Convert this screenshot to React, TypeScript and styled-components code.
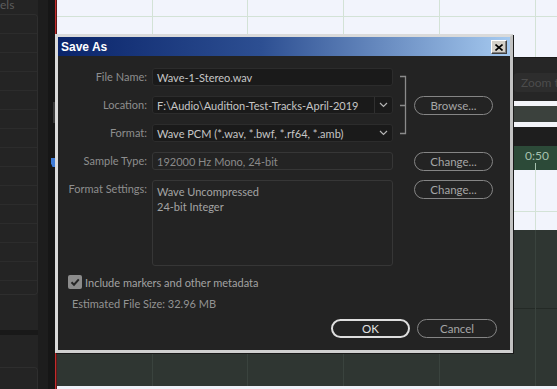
import React from "react";
import styled, { createGlobalStyle } from "styled-components";

const GlobalStyle = createGlobalStyle`
  html, body { margin: 0; padding: 0; background: #1f1f1f; }
  body { width: 557px; height: 389px; overflow: hidden; font-family: Lato, "Open Sans", sans-serif; }
  * { box-sizing: border-box; }
`;

const Screen = styled.div`
  position: relative;
  width: 557px;
  height: 389px;
  overflow: hidden;
  display: flex;
  background: #1f1f1f;
`;

/* ---------- left side panels ---------- */
const LeftPanel = styled.div`
  width: 38px;
  display: flex;
  flex-direction: column;
  background: #242424;
`;
const PanelHeader = styled.div`
  height: 14px;
  font-size: 12px;
  line-height: 10px;
  color: #5c5c5c;
  white-space: nowrap;
  overflow: hidden;
`;
const PanelList = styled.div`
  height: 281px;
  display: flex;
  flex-direction: column;
  border-top: 1px solid #2e2e2e;
  border-right: 1px solid #2e2e2e;
  border-bottom: 1px solid #2e2e2e;
  border-radius: 0 4px 4px 0;
  overflow: hidden;
`;
const PanelRow = styled.div`
  height: 19px;
  flex: none;
  border-bottom: 1px solid #2c2c2c;
`;
const PanelSpacer = styled.div<{ $h: number }>`
  height: ${(p) => p.$h}px;
  flex: none;
`;
const PanelDivider = styled.div`
  height: 5px;
  flex: none;
  background: #191919;
`;
const PanelBox = styled.div`
  flex: 1;
  border-top: 1px solid #2e2e2e;
  border-right: 1px solid #2e2e2e;
  border-radius: 0 4px 0 0;
`;
const Gutter = styled.div`
  width: 10px;
  background: #1d1d1d;
`;
const Strip = styled.div`
  width: 7px;
  background: #161616;
  display: flex;
  flex-direction: column;
  align-items: flex-end;
  padding-top: 102px;
`;
const Thumb = styled.div`
  width: 2px;
  height: 21px;
  background: #3a3a3a;
`;
const PlayMarker = styled.div`
  width: 4px;
  height: 9px;
  margin-top: 35px;
  background: #3d7bd8;
  clip-path: polygon(0 0, 100% 0, 100% 100%, 40% 100%, 0 60%);
`;
const RedLine = styled.div`
  width: 2px;
  background: linear-gradient(90deg, #c42c2c 0 1px, #5e1818 1px 2px);
`;

/* ---------- main editor area ---------- */
const gridLines = (c: string) =>
  `repeating-linear-gradient(90deg, transparent 0, transparent 94.75px, ${c} 94.75px, ${c} 95.75px)`;

const Main = styled.div`
  flex: 1;
  display: flex;
  flex-direction: column;
  overflow: hidden;
`;
const LightGrid = styled.div<{ $h: number; $line: number }>`
  height: ${(p) => p.$h}px;
  flex: none;
  background-color: #f2f4fc;
  background-image: ${gridLines("#d3e2d6")},
    linear-gradient(180deg, transparent ${(p) => p.$line}px, #d3e2d6 ${(p) => p.$line}px, #d3e2d6 ${(p) => p.$line + 1}px, transparent ${(p) => p.$line + 1}px);
`;
const Toolbar = styled.div`
  height: 44px;
  flex: none;
  background: #262626;
  border-top: 1px solid #1a1a1a;
  padding: 15px 0 0 457px;
  display: flex;
  align-items: flex-start;
`;
const ToolButton = styled.div`
  height: 19px;
  flex: none;
  padding: 0 7px;
  border-radius: 3px;
  background: #2d2d2d;
  color: #4c4c4c;
  font-size: 12px;
  line-height: 19px;
  white-space: nowrap;
`;
const Band = styled.div<{ $h: number; $bg: string }>`
  height: ${(p) => p.$h}px;
  flex: none;
  background: ${(p) => p.$bg};
`;
const Ruler = styled.div`
  height: 24px;
  flex: none;
  background: #2c4a38;
  display: flex;
  flex-direction: column;
  align-items: flex-start;
  padding: 3px 0 0 468px;
`;
const RulerLabel = styled.div`
  font-size: 12px;
  line-height: 14px;
  color: #a6c1ae;
`;
const RulerTick = styled.div`
  width: 1px;
  height: 7px;
  margin: auto 0 0 10px;
  background: #a6c1ae;
`;
const DarkGrid = styled.div`
  height: 156px;
  flex: none;
  background-color: #2f3632;
  background-image: ${gridLines("#3a433e")},
    linear-gradient(180deg, transparent 78px, #242a26 78px, #242a26 79px, transparent 79px);
`;

/* ---------- dialog ---------- */
const Dialog = styled.div`
  position: absolute;
  left: 55px;
  top: 34px;
  width: 458px;
  height: 319px;
  border: 3px solid #dadada;
  border-right-color: #c2c2c2;
  border-bottom-color: #d0d0d0;
  background: #232323;
  display: flex;
  flex-direction: column;
  box-shadow: 1px 1px 0 #1a1a1a;
`;
const TitleBar = styled.div`
  height: 19px;
  flex: none;
  display: flex;
  align-items: center;
  justify-content: space-between;
  padding: 0 3px 0 3px;
  background: linear-gradient(90deg, #0a246a 0%, #2d4f92 45%, #a6caf0 100%);
`;
const Title = styled.div`
  font-family: "Liberation Sans", Arial, sans-serif;
  font-weight: bold;
  font-size: 12px;
  color: #ffffff;
`;
const CloseButton = styled.div`
  width: 16px;
  height: 14px;
  background: #d4d0c8;
  border-top: 1px solid #ffffff;
  border-left: 1px solid #ffffff;
  border-right: 1px solid #404040;
  border-bottom: 1px solid #404040;
  box-shadow: inset -1px -1px 0 #808080;
  display: flex;
  align-items: center;
  justify-content: center;
  margin-top: 1px;
`;
const Body = styled.div`
  flex: 1;
  display: flex;
  flex-direction: column;
  padding: 12px 13px 0 0;
  font-size: 11px;
`;
const Form = styled.div`
  display: grid;
  grid-template-columns: 94px 241px 21px 79px;
  grid-template-rows: 18px 18px 18px 18px 86px;
  row-gap: 10px;
`;
const Label = styled.div<{ $top?: boolean }>`
  padding-right: 5px;
  text-align: right;
  font-size: 11px;
  line-height: 18px;
  color: #8e8e8e;
  white-space: nowrap;
  align-self: ${(p) => (p.$top ? "start" : "center")};
`;
const Field = styled.div<{ $disabled?: boolean }>`
  height: 18px;
  display: flex;
  align-items: center;
  border: 1px solid ${(p) => (p.$disabled ? "#363636" : "#2c2c2c")};
  border-radius: 3px;
  background: ${(p) => (p.$disabled ? "#232323" : "#1a1a1a")};
  color: ${(p) => (p.$disabled ? "#8a8a8a" : "#c6c6c6")};
  font-size: 11px;
  white-space: nowrap;
  overflow: hidden;
`;
const FieldText = styled.div`
  flex: 1;
  padding-left: 4px;
  overflow: hidden;
`;
const DropButton = styled.div<{ $divider?: boolean }>`
  width: 18px;
  align-self: stretch;
  display: flex;
  align-items: center;
  justify-content: center;
  border-left: 1px solid ${(p) => (p.$divider ? "#303030" : "transparent")};
`;
const TextArea = styled.div`
  border: 1px solid #363636;
  border-radius: 3px;
  background: #232323;
  color: #a4a4a4;
  font-size: 11px;
  line-height: 15px;
  padding: 3px 4px;
`;
const BracketCell = styled.div`
  grid-column: 3;
  grid-row: 1 / span 3;
`;
const Pill = styled.div<{ $primary?: boolean; $w?: number }>`
  width: ${(p) => p.$w ?? 79}px;
  height: 19px;
  flex: none;
  align-self: start;
  display: flex;
  align-items: center;
  justify-content: center;
  border: ${(p) => (p.$primary ? "2px solid #dedede" : "1.5px solid #858585")};
  border-radius: 10px;
  color: ${(p) => (p.$primary ? "#e4e4e4" : "#a6a6a6")};
  font-size: 11.5px;
`;
const CheckRow = styled.div`
  margin-top: 9px;
  padding-left: 10px;
  height: 14px;
  display: flex;
  align-items: center;
  gap: 3px;
  font-size: 11px;
  color: #a2a2a2;
  white-space: nowrap;
`;
const CheckBox = styled.div`
  width: 14px;
  height: 14px;
  border-radius: 2px;
  background: #8c8c8c;
  display: flex;
  align-items: center;
  justify-content: center;
`;
const Estimate = styled.div`
  margin-top: 8px;
  padding-left: 14px;
  height: 14px;
  line-height: 14px;
  font-size: 11px;
  color: #939393;
`;
const ButtonRow = styled.div`
  margin-top: 8px;
  display: flex;
  justify-content: flex-end;
  gap: 7px;
`;

const Chevron = () => (
  <svg width="9" height="6" viewBox="0 0 9 6">
    <polyline points="1,1 4.5,4.5 8,1" fill="none" stroke="#b4b4b4" strokeWidth="1.2" />
  </svg>
);

const Bracket = () => (
  <svg width="21" height="74" viewBox="0 0 21 74">
    <path d="M7 8.5 H12.5 V65.5 H7 M7 37.5 H12.5" fill="none" stroke="#8a8a8a" strokeWidth="1.3" />
  </svg>
);

export default function App() {
  const rows = Array.from({ length: 14 });
  return (
    <>
      <GlobalStyle />
      <Screen>
        <LeftPanel>
          <PanelHeader>els</PanelHeader>
          <PanelList>
            {rows.map((_, i) => (
              <PanelRow key={i} />
            ))}
          </PanelList>
          <PanelSpacer $h={35} />
          <PanelDivider />
          <PanelSpacer $h={32} />
          <PanelBox />
        </LeftPanel>
        <Gutter />
        <Strip>
          <Thumb />
          <PlayMarker />
        </Strip>
        <RedLine />
        <Main>
          <LightGrid $h={57} $line={16} />
          <Toolbar>
            <ToolButton>Zoom to Selection</ToolButton>
          </Toolbar>
          <Band $h={5} $bg="#f3f4f9" />
          <Band $h={16} $bg="#3b413d" />
          <Band $h={5} $bg="#f3f4f9" />
          <Band $h={19} $bg="#1e1e1e" />
          <Ruler>
            <RulerLabel>0:50</RulerLabel>
            <RulerTick />
          </Ruler>
          <LightGrid $h={60} $line={41} />
          <DarkGrid />
          <Band $h={3} $bg="#eef0f8" />
        </Main>

        <Dialog>
          <TitleBar>
            <Title>Save As</Title>
            <CloseButton>
              <svg width="8" height="7" viewBox="0 0 8 7">
                <path d="M0.5 0.5 L7.5 6.5 M7.5 0.5 L0.5 6.5" stroke="#000" strokeWidth="1.6" />
              </svg>
            </CloseButton>
          </TitleBar>
          <Body>
            <Form>
              <Label>File Name:</Label>
              <Field>
                <FieldText>Wave-1-Stereo.wav</FieldText>
              </Field>
              <BracketCell>
                <Bracket />
              </BracketCell>
              <div />

              <Label>Location:</Label>
              <Field>
                <FieldText>F:\Audio\Audition-Test-Tracks-April-2019</FieldText>
                <DropButton $divider>
                  <Chevron />
                </DropButton>
              </Field>
              <Pill>Browse...</Pill>

              <Label>Format:</Label>
              <Field>
                <FieldText>Wave PCM (*.wav, *.bwf, *.rf64, *.amb)</FieldText>
                <DropButton>
                  <Chevron />
                </DropButton>
              </Field>
              <div />

              <Label>Sample Type:</Label>
              <Field $disabled>
                <FieldText>192000 Hz Mono, 24-bit</FieldText>
              </Field>
              <div />
              <Pill>Change...</Pill>

              <Label $top>Format Settings:</Label>
              <TextArea>
                Wave Uncompressed
                <br />
                24-bit Integer
              </TextArea>
              <div />
              <Pill>Change...</Pill>
            </Form>
            <CheckRow>
              <CheckBox>
                <svg width="12" height="12" viewBox="0 0 12 12">
                  <path d="M2.5 6.2 L5 8.7 L9.8 3.3" fill="none" stroke="#262626" strokeWidth="2" />
                </svg>
              </CheckBox>
              Include markers and other metadata
            </CheckRow>
            <Estimate>Estimated File Size: 32.96 MB</Estimate>
            <ButtonRow>
              <Pill $primary>OK</Pill>
              <Pill $w={80}>Cancel</Pill>
            </ButtonRow>
          </Body>
        </Dialog>
      </Screen>
    </>
  );
}
